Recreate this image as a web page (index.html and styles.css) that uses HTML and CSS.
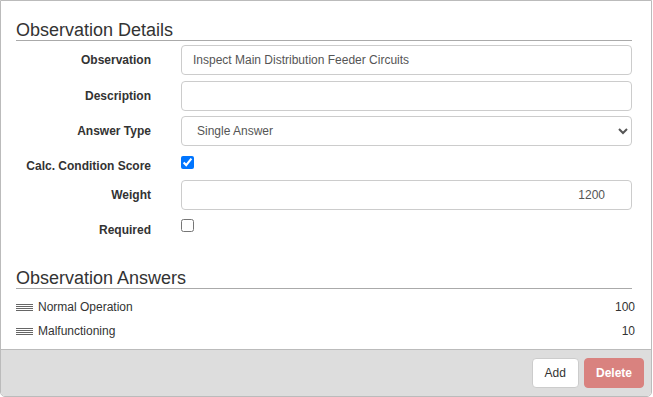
FILE: index.html
```html
<!DOCTYPE html>
<html lang="en">
<head>
    <meta charset="UTF-8">
    <meta name="viewport" content="width=device-width, initial-scale=1.0">
    <title>Observation Details</title>
    <link rel="stylesheet" href="styles.css">
</head>
<body>
    <div class="panel">
        <div class="panel-body">
            <h2 class="section-title">Observation Details</h2>
            <div class="form">
                <label class="form-label" for="observation">Observation</label>
                <input class="form-control" type="text" id="observation" value="Inspect Main Distribution Feeder Circuits">

                <label class="form-label" for="description">Description</label>
                <input class="form-control" type="text" id="description" value="">

                <label class="form-label" for="answerType">Answer Type</label>
                <select class="form-control select" id="answerType">
                    <option>Single Answer</option>
                    <option>Multiple Answers</option>
                </select>

                <label class="form-label check-label" for="calcScore">Calc. Condition Score</label>
                <div class="check-cell"><input type="checkbox" id="calcScore" checked></div>

                <label class="form-label" for="weight">Weight</label>
                <input class="form-control number" type="text" id="weight" value="1200">

                <label class="form-label check-label" for="required">Required</label>
                <div class="check-cell"><input type="checkbox" id="required"></div>
            </div>

            <h2 class="section-title answers-title">Observation Answers</h2>
            <ul class="answers">
                <li class="answer">
                    <span class="handle"><span></span><span></span><span></span><span></span></span>
                    <span class="answer-name">Normal Operation</span>
                    <span class="answer-score">100</span>
                </li>
                <li class="answer">
                    <span class="handle"><span></span><span></span><span></span><span></span></span>
                    <span class="answer-name">Malfunctioning</span>
                    <span class="answer-score">10</span>
                </li>
            </ul>
        </div>
        <div class="panel-footer">
            <button class="btn btn-default">Add</button>
            <button class="btn btn-danger" disabled>Delete</button>
        </div>
    </div>
</body>
</html>
```

FILE: styles.css
```css
body {
    margin: 0;
    font-family: "Liberation Sans", Arial, sans-serif;
    font-size: 12px;
    color: #333;
    background-color: #fff;
}
.panel {
    width: 652px;
    height: 397px;
    box-sizing: border-box;
    border: 1px solid #bbb;
    border-radius: 0 0 5px 5px;
    display: flex;
    flex-direction: column;
    overflow: hidden;
}
.panel-body {
    flex-grow: 1;
    padding: 19px 19px 0 15px;
}
.section-title {
    margin: 0;
    font-size: 18px;
    font-weight: normal;
    line-height: 20px;
    color: #333;
    border-bottom: 1px solid #aaa;
}
.form {
    display: grid;
    grid-template-columns: 135px 1fr;
    column-gap: 30px;
    margin-top: 4px;
}
.form-label {
    font-weight: bold;
    text-align: right;
    align-self: start;
    line-height: 30px;
}
.form-control {
    height: 30px;
    box-sizing: border-box;
    border: 1px solid #ccc;
    border-radius: 4px;
    padding: 0 11px;
    font-family: inherit;
    font-size: 12px;
    color: #555;
    background-color: #fff;
    outline: none;
    margin-bottom: 5px;
}
#observation {
    margin-bottom: 6px;
}
.number {
    text-align: right;
    padding-right: 26px;
}
.check-label {
    padding-top: 7px;
    line-height: 17px;
}
.check-cell {
    height: 24px;
    margin-bottom: 5px;
}
.check-cell input {
    margin: 5px 0 0;
    width: 13px;
    height: 13px;
}
#required {
    margin-top: 4px;
}
.answers-title {
    margin-top: 24px;
}
.answers {
    list-style: none;
    margin: 6px -3px 0 0;
    padding: 0;
}
.answer {
    display: flex;
    align-items: center;
    height: 24px;
}
.handle {
    display: flex;
    flex-direction: column;
    gap: 1px;
    width: 17px;
    margin-right: 5px;
}
.handle span {
    height: 1px;
    background-color: #666;
}
.answer-name {
    flex-grow: 1;
}
.answer-score {
    text-align: right;
}
.panel-footer {
    display: flex;
    justify-content: flex-end;
    gap: 5px;
    padding: 8px 7px 8px;
    background-color: #ddd;
    border-top: 1px solid #bbb;
}
.btn {
    height: 30px;
    padding: 0 12px;
    border-radius: 4px;
    font-family: inherit;
    font-size: 12px;
    cursor: pointer;
}
.btn-default {
    background-color: #fff;
    border: 1px solid #ccc;
    color: #333;
}
.btn-danger {
    background-color: #d9827f;
    border: 1px solid #d9827f;
    color: #fff;
    font-weight: bold;
    padding: 0 11px;
}
```
